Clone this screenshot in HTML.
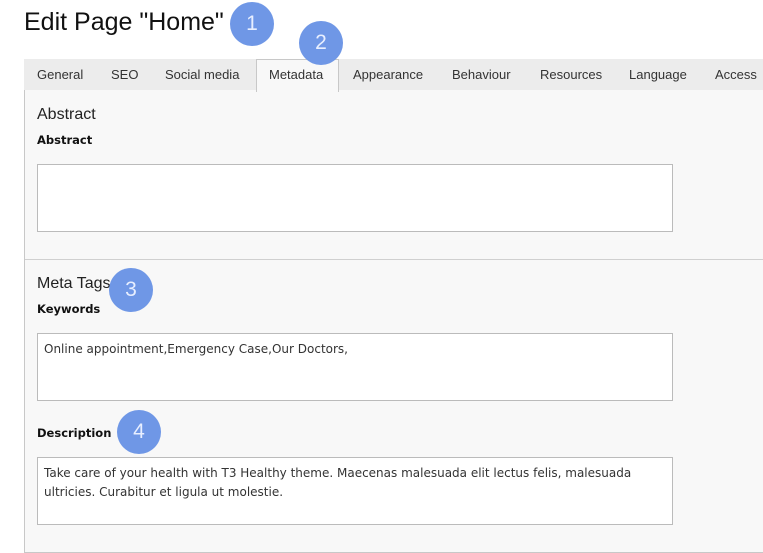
<!DOCTYPE html>
<html><head><style>
*{margin:0;padding:0;box-sizing:border-box}
body{width:763px;height:553px;background:#fff;font-family:"Liberation Sans",sans-serif;position:relative;overflow:hidden;color:#111}
.a{position:absolute;white-space:nowrap}
.tab{position:absolute;top:67px;font-size:13px;color:#333}
.ta{position:absolute;left:37px;width:636px;height:68px;border:1px solid #bbb;background:#fff;font-family:"DejaVu Sans",sans-serif;font-size:12px;color:#333;padding:6px 6px;line-height:19px}
.c{position:absolute;border-radius:50%;background:#6f97e6;color:#e8efff;font-size:21px;text-align:center}
.lbl{position:absolute;left:37px;font-family:"DejaVu Sans",sans-serif;font-size:11.5px;font-weight:bold;color:#111}
.h{position:absolute;left:37px;font-size:16px;color:#222}
</style></head><body>
<div class="a" style="left:24px;top:8px;font-size:25px;color:#111">Edit Page "Home"</div>
<div class="a" style="left:24px;top:59px;width:739px;height:32px;background:#ececec;border-bottom:1px solid #c8c8c8"></div>
<div class="a" style="left:24px;top:90px;width:739px;height:463px;background:#f8f8f8;border-left:1px solid #c8c8c8;border-bottom:1px solid #c8c8c8"></div>
<div class="a" style="left:256px;top:59px;width:83px;height:33px;background:#f8f8f8;border:1px solid #c8c8c8;border-bottom:none"></div>
<div class="tab" style="left:37px">General</div>
<div class="tab" style="left:111px">SEO</div>
<div class="tab" style="left:165px">Social media</div>
<div class="tab" style="left:269px">Metadata</div>
<div class="tab" style="left:353px">Appearance</div>
<div class="tab" style="left:452px">Behaviour</div>
<div class="tab" style="left:540px">Resources</div>
<div class="tab" style="left:629px">Language</div>
<div class="tab" style="left:715px">Access</div>
<div class="h" style="top:106px">Abstract</div>
<div class="lbl" style="top:133px">Abstract</div>
<div class="ta" style="top:164px"></div>
<div class="a" style="left:25px;top:259px;width:738px;height:1px;background:#d0d0d0"></div>
<div class="h" style="top:275px">Meta Tags</div>
<div class="lbl" style="top:302px">Keywords</div>
<div class="ta" style="top:333px">Online appointment,Emergency Case,Our Doctors,</div>
<div class="lbl" style="top:426px">Description</div>
<div class="ta" style="top:457px">Take care of your health with T3 Healthy theme. Maecenas malesuada elit lectus felis, malesuada<br>ultricies. Curabitur et ligula ut molestie.</div>
<div class="c" style="left:230px;top:2px;width:44px;height:44px;line-height:44px">1</div>
<div class="c" style="left:299px;top:21px;width:44px;height:44px;line-height:44px">2</div>
<div class="c" style="left:109px;top:268px;width:44px;height:44px;line-height:44px">3</div>
<div class="c" style="left:117px;top:410px;width:44px;height:44px;line-height:44px">4</div>
</body></html>
